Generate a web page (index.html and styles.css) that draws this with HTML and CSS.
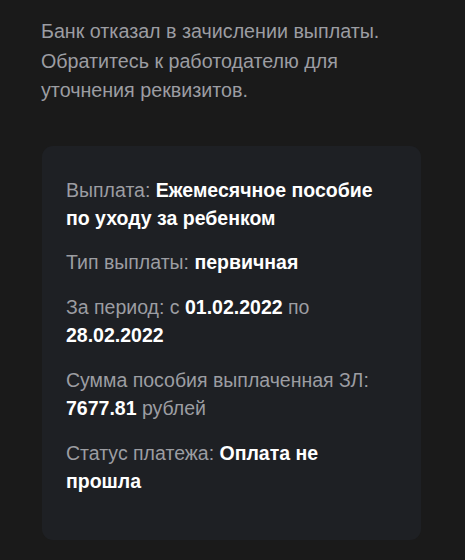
FILE: index.html
```html
<!DOCTYPE html>
<html lang="ru">
<head>
<meta charset="utf-8">
<link rel="stylesheet" href="styles.css">
</head>
<body>
<main class="page">
  <p class="notice">Банк отказал в зачислении выплаты. Обратитесь к работодателю для уточнения реквизитов.</p>
  <section class="card">
    <p class="row">Выплата: <b>Ежемесячное пособие по уходу за ребенком</b></p>
    <p class="row">Тип выплаты: <b>первичная</b></p>
    <p class="row">За период: с <b>01.02.2022</b> по <b>28.02.2022</b></p>
    <p class="row">Сумма пособия выплаченная ЗЛ: <b>7677.81</b> рублей</p>
    <p class="row">Статус платежа: <b>Оплата не прошла</b></p>
  </section>
</main>
</body>
</html>
```

FILE: styles.css
```css
html, body {
  margin: 0;
  padding: 0;
  background: #1a1a1a;
}
.page {
  padding: 17px 44px 0 41px;
  font-family: "Liberation Sans", Arial, sans-serif;
}
.notice {
  margin: 0;
  font-size: 19.7px;
  line-height: 29.5px;
  color: #9c9da2;
  max-width: 370px;
}
.card {
  margin-top: 40px;
  margin-left: 1px;
  width: 379px;
  box-sizing: border-box;
  height: 394px;
  background: #1e2024;
  border-radius: 11px;
  padding: 30px 24px 0 24px;
}
.row {
  margin: 0 0 16.3px 0;
  font-size: 19.5px;
  line-height: 28.3px;
  color: #9c9da2;
  max-width: 322px;
}
.row b {
  color: #ffffff;
  font-weight: 700;
}
```
